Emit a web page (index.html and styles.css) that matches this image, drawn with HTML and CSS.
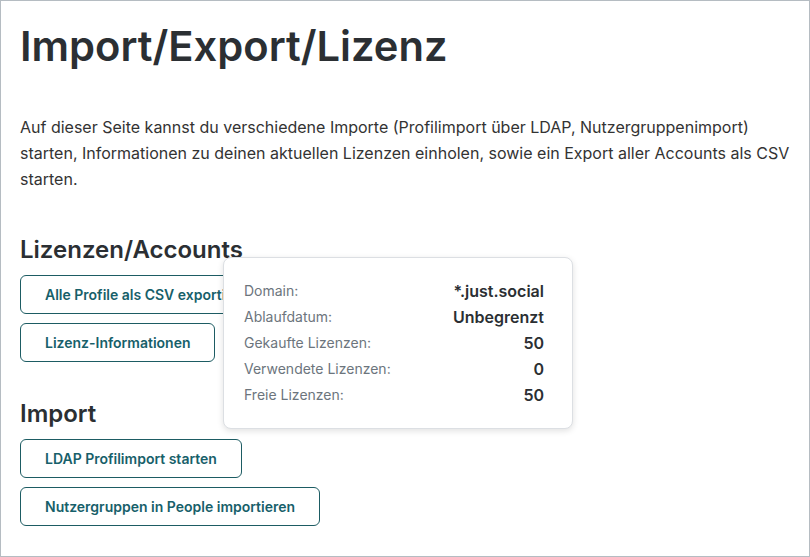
FILE: index.html
```html
<!DOCTYPE html>
<html lang="de">
<head>
    <meta charset="UTF-8">
    <meta name="viewport" content="width=device-width, initial-scale=1.0">
    <title>Import/Export/Lizenz</title>
    <link rel="stylesheet" href="styles.css">
</head>
<body>
    <div class="page">
        <h1>Import/Export/Lizenz</h1>

        <p class="intro">
            Auf dieser Seite kannst du verschiedene Importe (Profilimport über LDAP, Nutzergruppenimport)
            starten, Informationen zu deinen aktuellen Lizenzen einholen, sowie ein Export aller Accounts als CSV
            starten.
        </p>

        <section class="block licence-block">
            <h2>Lizenzen/Accounts</h2>
            <div class="actions">
                <button class="action-button">Alle Profile als CSV exportieren</button>
                <button class="action-button">Lizenz-Informationen</button>
            </div>

            <div class="licence-popover">
                <dl class="licence-list">
                    <dt>Domain:</dt>
                    <dd>*.just.social</dd>
                    <dt>Ablaufdatum:</dt>
                    <dd>Unbegrenzt</dd>
                    <dt>Gekaufte Lizenzen:</dt>
                    <dd>50</dd>
                    <dt>Verwendete Lizenzen:</dt>
                    <dd>0</dd>
                    <dt>Freie Lizenzen:</dt>
                    <dd>50</dd>
                </dl>
            </div>
        </section>

        <section class="block">
            <h2>Import</h2>
            <div class="actions">
                <button class="action-button">LDAP Profilimport starten</button>
                <button class="action-button">Nutzergruppen in People importieren</button>
            </div>
        </section>
    </div>
</body>
</html>
```

FILE: styles.css
```css
* {
    box-sizing: border-box;
}
body {
    margin: 0;
    font-family: Inter, "Noto Sans", Arial, sans-serif;
    color: #2b2f33;
    background: #fff;
}
.page {
    width: 810px;
    height: 557px;
    border: 1px solid #b5bcc2;
    padding: 17px 19px 0;
    overflow: hidden;
}
h1 {
    margin: 0 0 40px;
    font-size: 41.7px;
    line-height: 56px;
    font-weight: 600;
}
.intro {
    margin: 0 0 44px;
    font-size: 16px;
    line-height: 26px;
    color: #333;
}
.block {
    margin-bottom: 38px;
}
.licence-block {
    position: relative;
}
h2 {
    margin: 0 0 11px;
    font-size: 24px;
    line-height: 28px;
    font-weight: 600;
}
.actions {
    display: flex;
    flex-direction: column;
    align-items: flex-start;
    gap: 9px;
}
.action-button {
    height: 39px;
    padding: 0 24px;
    background: #fff;
    border: 1px solid #1d5c63;
    border-radius: 6px;
    color: #17606a;
    font-family: inherit;
    font-size: 14px;
    font-weight: 600;
    cursor: pointer;
}
.licence-popover {
    position: absolute;
    left: 203px;
    top: 21px;
    width: 350px;
    height: 172px;
    padding: 20px 28px 0 20px;
    background: #fff;
    border: 1px solid #dcdfe3;
    border-radius: 8px;
    box-shadow: 0 2px 6px rgba(0,0,0,0.12);
}
.licence-list {
    display: grid;
    grid-template-columns: 1fr auto;
    margin: 0;
    line-height: 26px;
}
.licence-list dt {
    font-size: 14px;
    color: #6c757d;
}
.licence-list dd {
    margin: 0;
    text-align: right;
    font-size: 16px;
    font-weight: 600;
    color: #2b2f33;
}
```
